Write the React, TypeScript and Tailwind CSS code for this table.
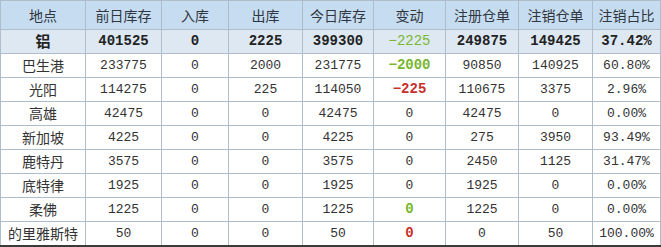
import React from 'react';

type Row = {
  place: string;
  prev: string;
  inn: string;
  out: string;
  today: string;
  change: string;
  changeColor?: 'green' | 'red';
  reg: string;
  cancel: string;
  ratio: string;
};

const headers = ['地点', '前日库存', '入库', '出库', '今日库存', '变动', '注册仓单', '注销仓单', '注销占比'];
const widths = [85, 76, 67, 74, 71, 72, 73, 74, 68];

const total: Row = {
  place: '铝', prev: '401525', inn: '0', out: '2225', today: '399300',
  change: '-2225', changeColor: 'green', reg: '249875', cancel: '149425', ratio: '37.42%',
};

const rows: Row[] = [
  { place: '巴生港', prev: '233775', inn: '0', out: '2000', today: '231775', change: '-2000', changeColor: 'green', reg: '90850', cancel: '140925', ratio: '60.80%' },
  { place: '光阳', prev: '114275', inn: '0', out: '225', today: '114050', change: '-225', changeColor: 'red', reg: '110675', cancel: '3375', ratio: '2.96%' },
  { place: '高雄', prev: '42475', inn: '0', out: '0', today: '42475', change: '0', reg: '42475', cancel: '0', ratio: '0.00%' },
  { place: '新加坡', prev: '4225', inn: '0', out: '0', today: '4225', change: '0', reg: '275', cancel: '3950', ratio: '93.49%' },
  { place: '鹿特丹', prev: '3575', inn: '0', out: '0', today: '3575', change: '0', reg: '2450', cancel: '1125', ratio: '31.47%' },
  { place: '底特律', prev: '1925', inn: '0', out: '0', today: '1925', change: '0', reg: '1925', cancel: '0', ratio: '0.00%' },
  { place: '柔佛', prev: '1225', inn: '0', out: '0', today: '1225', change: '0', changeColor: 'green', reg: '1225', cancel: '0', ratio: '0.00%' },
  { place: '的里雅斯特', prev: '50', inn: '0', out: '0', today: '50', change: '0', changeColor: 'red', reg: '0', cancel: '50', ratio: '100.00%' },
];

const cjk = "font-['Noto_Sans_CJK_SC',sans-serif]";
const mono = "font-['Liberation_Mono','Noto_Sans_CJK_SC',monospace]";
const cell = 'border border-[#aebccb] p-0 text-center whitespace-nowrap';

const changeClass = (c?: 'green' | 'red') =>
  c === 'green' ? 'text-[#77b72c] font-bold' : c === 'red' ? 'text-[#c8302c] font-bold' : '';

export default function App() {
  return (
    <div className="w-[661px] h-[247px] bg-white overflow-hidden">
      <table className="table-fixed border-collapse w-[661px] text-[#333] border-b-2 border-b-[#3a3a3a]">
        <colgroup>
          {widths.map((w, i) => (
            <col key={i} style={{ width: w }} />
          ))}
        </colgroup>
        <thead>
          <tr className="h-[29px] bg-[#c6dcf0]">
            {headers.map((h) => (
              <th key={h} className={`${cell} ${cjk} text-[14px] font-normal text-[#2f3640]`}>{h}</th>
            ))}
          </tr>
        </thead>
        <tbody>
          <tr className="h-[24px] bg-[#dde8f3] font-bold text-[14px] text-[#222]">
            <td className={`${cell} ${cjk} text-[15px]`}>{total.place}</td>
            <td className={`${cell} ${mono}`}>{total.prev}</td>
            <td className={`${cell} ${mono}`}>{total.inn}</td>
            <td className={`${cell} ${mono}`}>{total.out}</td>
            <td className={`${cell} ${mono}`}>{total.today}</td>
            <td className={`${cell} ${mono} text-[#7ab82e] font-normal`}>{total.change.replace('-', '−')}</td>
            <td className={`${cell} ${mono}`}>{total.reg}</td>
            <td className={`${cell} ${mono}`}>{total.cancel}</td>
            <td className={`${cell} ${mono}`}>{total.ratio}</td>
          </tr>
          {rows.map((r) => (
            <tr key={r.place} className="h-[24px] bg-white text-[13px]">
              <td className={`${cell} ${cjk} text-[14px]`}>{r.place}</td>
              <td className={`${cell} ${mono}`}>{r.prev}</td>
              <td className={`${cell} ${mono}`}>{r.inn}</td>
              <td className={`${cell} ${mono}`}>{r.out}</td>
              <td className={`${cell} ${mono}`}>{r.today}</td>
              <td className={`${cell} ${mono} ${changeClass(r.changeColor)} ${r.changeColor ? 'text-[14px]' : ''}`}>
                {r.change.replace('-', '−')}
              </td>
              <td className={`${cell} ${mono}`}>{r.reg}</td>
              <td className={`${cell} ${mono}`}>{r.cancel}</td>
              <td className={`${cell} ${mono}`}>{r.ratio}</td>
            </tr>
          ))}
        </tbody>
      </table>
    </div>
  );
}
